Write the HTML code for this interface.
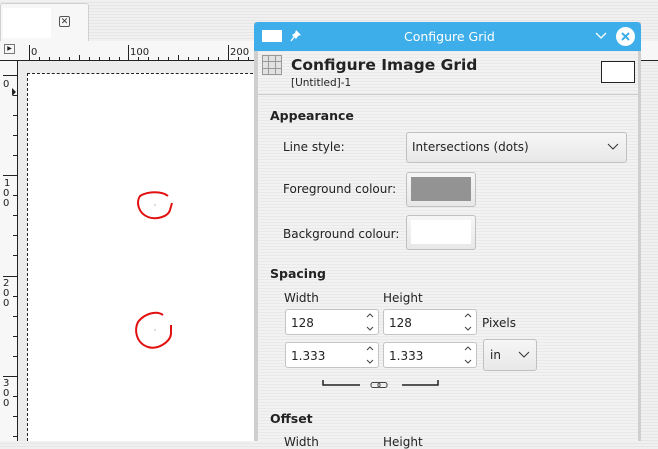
<!DOCTYPE html>
<html><head><meta charset="utf-8"><style>
*{margin:0;padding:0;box-sizing:border-box}
body{width:658px;height:441px;overflow:hidden;position:relative;font-family:"Liberation Sans","DejaVu Sans",sans-serif;font-size:13px;color:#222;
background:repeating-linear-gradient(#f0f0f0 0 2px,#e6e6e6 2px 3px)}
.a{position:absolute}
.stripe{background:repeating-linear-gradient(#f2f2f2 0 2px,#e9e9e9 2px 3px)}
.box{border:1px solid #c4c4c4;border-radius:3px;background:#fff}
.btn{border:1px solid #c0c0c0;border-radius:3px;background:linear-gradient(#f6f6f6,#e8e8e8)}
.lbl{font-family:"DejaVu Sans",sans-serif;font-size:12px}
.b{font-family:"DejaVu Sans",sans-serif;font-weight:bold;font-size:12.5px}
.spin{position:absolute;font-family:"DejaVu Sans",sans-serif;font-size:12px;padding:6px 0 0 5px}
</style></head><body>
<div class="a" style="left:0;top:3px;width:89px;height:38px;background:#f7f7f7;border:1px solid #d0d0d0;border-bottom:none;border-radius:3px 3px 0 0"></div>
<div class="a" style="left:3px;top:8px;width:48px;height:30px;background:#fff"></div>
<div class="a" style="left:59px;top:16px;width:11px;height:11px;border:1px solid #555;border-radius:2px;font-size:9px;line-height:9px;text-align:center;color:#333">✕</div>
<div class="a" style="left:0;top:41px;width:658px;height:20px;background:#f7f7f7;border-bottom:1px solid #222"></div>
<div class="a" style="left:4px;top:44px;width:11px;height:10px;border:1px solid #777;font-size:6px;line-height:8px;text-align:center">▶</div>
<svg class="a" style="left:0;top:41px" width="260" height="20">
<g stroke="#222" stroke-width="1">
<line x1="29.5" y1="4" x2="29.5" y2="20"/><line x1="128.5" y1="4" x2="128.5" y2="20"/><line x1="228.5" y1="4" x2="228.5" y2="20"/>
<line x1="19" y1="19.5" x2="24" y2="19.5"/>
</g>
<g stroke="#222">
<path d="M39.5 16v4M49.5 16v4M59.5 16v4M69.5 16v4M79.5 14v6M89.5 16v4M99.5 16v4M109.5 16v4M119.5 16v4M138.5 16v4M148.5 16v4M158.5 16v4M168.5 16v4M178.5 14v6M188.5 16v4M198.5 16v4M208.5 16v4M218.5 16v4M238.5 16v4M248.5 16v4"/>
</g>
<g font-size="10" fill="#222" font-family="DejaVu Sans"><text x="31" y="14">0</text><text x="130" y="14">100</text><text x="230" y="14">200</text></g>
</svg>
<div class="a" style="left:0;top:61px;width:18px;height:380px;background:#f7f7f7;border-right:1px solid #222"></div>
<div class="a" style="left:18px;top:61px;width:240px;height:380px;background:#ececec"></div>
<svg class="a" style="left:0;top:61px" width="18" height="380">
<g stroke="#222"><path d="M3 14.5h15M3 114.5h15M3 215.5h15M3 315.5h15M13 34.5h5M13 54.5h5M13 74.5h5M13 94.5h5M13 134.5h5M13 154.5h5M13 174.5h5M13 194.5h5M13 235.5h5M13 255.5h5M13 275.5h5M13 295.5h5M13 335.5h5M13 355.5h5M13 375.5h5"/></g>
<g font-size="10" fill="#222" font-family="DejaVu Sans"><text x="3" y="26">0</text>
<text x="4" y="125">1</text><text x="3" y="135">0</text><text x="3" y="145">0</text>
<text x="3" y="225">2</text><text x="3" y="235">0</text><text x="3" y="245">0</text>
<text x="3" y="325">3</text><text x="3" y="335">0</text><text x="3" y="345">0</text></g>
<path d="M12 27l4 4-4 4z" fill="#222"/>
</svg>
<div class="a" style="left:27px;top:73px;width:231px;height:368px;background:#fff;border-top:1px dashed #222;border-left:1px dashed #222"></div>
<svg class="a" style="left:120px;top:180px" width="80" height="180">
<g fill="none" stroke="#e31010" stroke-width="2">
<path d="M48 16C42 11 28 11 20 16C16 22 18 33 28 37C36 40 48 37 50 30L52 23"/>
<path d="M43 135C36 130 24 134 18 142C14 150 16 163 28 167C38 170 50 162 51 154L51 145"/>
</g>
<circle cx="35" cy="25" r="0.6" fill="#888"/><circle cx="35" cy="150" r="0.6" fill="#888"/>
</svg>
<div class="a stripe" style="left:254px;top:22px;width:387px;height:419px;border-left:4px solid #cfcfcf;border-right:3px solid #cfcfcf"></div>
<div class="a" style="left:254px;top:22px;width:387px;height:29px;background:#3daee9;border-radius:4px 4px 0 0"></div>
<div class="a" style="left:262px;top:30px;width:20px;height:12px;background:#fff"></div>
<svg class="a" style="left:290px;top:29px" width="12" height="14"><path d="M6 1l5 5-3 1-2 3-4-4 3-2z" fill="#fff"/><path d="M4 8l-3 4" stroke="#fff" stroke-width="1.3"/></svg>
<div class="a" style="left:404px;top:29px;color:#fff;font-family:'DejaVu Sans',sans-serif;font-size:12.5px">Configure Grid</div>
<svg class="a" style="left:594px;top:31px" width="14" height="10"><path d="M2 2l5 5 5-5" fill="none" stroke="#fff" stroke-width="1.3"/></svg>
<div class="a" style="left:616px;top:27px;width:19px;height:19px;border-radius:50%;background:#fff"></div>
<svg class="a" style="left:616px;top:27px" width="19" height="19"><path d="M6 6l7 7M13 6l-7 7" stroke="#3daee9" stroke-width="2"/></svg>
<div class="a" style="left:258px;top:51px;width:380px;height:44px;border-bottom:1px solid #ccc"></div>
<svg class="a" style="left:262px;top:55px" width="20" height="20"><g fill="none" stroke="#999"><rect x="0.5" y="0.5" width="19" height="19" fill="#e2e2e2"/><path d="M6.5 1v18M13.5 1v18M1 6.5h18M1 13.5h18"/></g></svg>
<div class="a" style="left:291px;top:56px;font-family:'DejaVu Sans',sans-serif;font-weight:bold;font-size:15.5px">Configure Image Grid</div>
<div class="a" style="left:291px;top:77px;font-family:'DejaVu Sans',sans-serif;font-size:10.5px">[Untitled]-1</div>
<div class="a" style="left:601px;top:61px;width:34px;height:22px;background:#fff;border:1px solid #222"></div>
<div class="a b" style="left:270px;top:108px">Appearance</div>
<div class="a lbl" style="left:283px;top:140px">Line style:</div>
<div class="a btn" style="left:406px;top:132px;width:221px;height:31px"></div>
<div class="a lbl" style="left:412px;top:140px">Intersections (dots)</div>
<svg class="a" style="left:607px;top:143px" width="12" height="8"><path d="M1 1l5 5 5-5" fill="none" stroke="#333"/></svg>
<div class="a lbl" style="left:283px;top:182px">Foreground colour:</div>
<div class="a btn" style="left:406px;top:172px;width:70px;height:35px"></div>
<div class="a" style="left:411px;top:177px;width:60px;height:24px;background:#939393"></div>
<div class="a lbl" style="left:283px;top:227px">Background colour:</div>
<div class="a btn" style="left:406px;top:215px;width:70px;height:35px"></div>
<div class="a" style="left:411px;top:220px;width:60px;height:24px;background:#fff"></div>
<div class="a b" style="left:270px;top:266px">Spacing</div>
<div class="a lbl" style="left:284px;top:291px">Width</div>
<div class="a lbl" style="left:383px;top:291px">Height</div>
<div class="a box spin" style="left:285px;top:309px;width:94px;height:26px">128</div>
<div class="a box spin" style="left:383px;top:309px;width:94px;height:26px">128</div>
<div class="a lbl" style="left:482px;top:316px">Pixels</div>
<div class="a box spin" style="left:285px;top:342px;width:94px;height:26px">1.333</div>
<div class="a box spin" style="left:383px;top:342px;width:94px;height:26px">1.333</div>
<svg class="a" style="left:366px;top:312px" width="8" height="20"><path d="M1 5l3-3 3 3M1 15l3 3 3-3" fill="none" stroke="#444"/></svg>
<svg class="a" style="left:464px;top:312px" width="8" height="20"><path d="M1 5l3-3 3 3M1 15l3 3 3-3" fill="none" stroke="#444"/></svg>
<svg class="a" style="left:366px;top:345px" width="8" height="20"><path d="M1 5l3-3 3 3M1 15l3 3 3-3" fill="none" stroke="#444"/></svg>
<svg class="a" style="left:464px;top:345px" width="8" height="20"><path d="M1 5l3-3 3 3M1 15l3 3 3-3" fill="none" stroke="#444"/></svg>
<div class="a btn" style="left:483px;top:339px;width:54px;height:32px"></div>
<div class="a lbl" style="left:490px;top:348px">in</div>
<svg class="a" style="left:518px;top:351px" width="12" height="8"><path d="M1 1l5 5 5-5" fill="none" stroke="#333"/></svg>
<svg class="a" style="left:320px;top:378px" width="122" height="12"><g fill="none" stroke="#222" stroke-width="1.5"><path d="M3 2v5h37M82 7h36v-5"/></g><g fill="none" stroke="#444"><rect x="51" y="4.5" width="9" height="5" rx="2"/><rect x="58" y="4.5" width="9" height="5" rx="2"/></g></svg>
<div class="a b" style="left:270px;top:411px">Offset</div>
<div class="a lbl" style="left:284px;top:435px">Width</div>
<div class="a lbl" style="left:383px;top:435px">Height</div>
</body></html>
